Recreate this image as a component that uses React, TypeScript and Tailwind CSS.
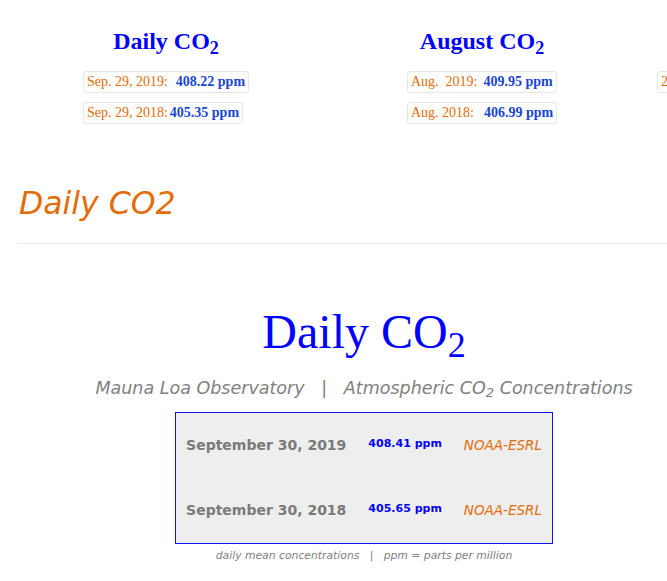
import React from 'react';

const serif = "font-['Liberation_Serif','Times_New_Roman',serif]";
const sans = "font-['DejaVu_Sans','Verdana',sans-serif]";

type Reading = { date: string; value: string; gap: string; shift?: string };

const tiles: { title: string; rows: Reading[]; align?: string }[] = [
  {
    title: 'Daily CO',
    rows: [
      { date: 'Sep. 29, 2019:', value: '408.22 ppm', gap: 'gap-[8px]' },
      { date: 'Sep. 29, 2018:', value: '405.35 ppm', gap: 'gap-[2px]' },
    ],
  },
  {
    title: 'August CO',
    rows: [
      { date: 'Aug.\u00a0\u00a02019:', value: '409.95 ppm', gap: 'gap-[6px]' },
      { date: 'Aug. 2018:', value: '406.99 ppm', gap: 'gap-[10px]' },
    ],
  },
  {
    title: 'Annual CO',
    align: 'items-start pl-[17px]',
    rows: [
      { date: '2018 Annual Mean:', value: '408.52 ppm', gap: 'gap-[8px]' },
      { date: '2017 Annual Mean:', value: '406.76 ppm', gap: 'gap-[8px]', shift: 'ml-[14px]' },
    ],
  },
];

const daily = [
  { date: 'September 30, 2019', value: '408.41 ppm' },
  { date: 'September 30, 2018', value: '405.65 ppm' },
];

function Tile({ title, rows, align }: (typeof tiles)[number]) {
  return (
    <div className={`w-[316px] shrink-0 flex flex-col ${align ?? 'items-center'}`}>
      <h2 className={`${serif} text-[24px] leading-[28px] font-bold text-[#0000ff] ${align ? 'self-center' : ''}`}>
        {title}<sub>2</sub>
      </h2>
      <div className="mt-[16px] flex flex-col gap-[9px] items-[inherit]">
        {rows.map((r) => (
          <div
            key={r.date}
            className={`${serif} ${r.gap} ${r.shift ?? ''} flex text-[14px] leading-[16px] whitespace-nowrap border border-[#e6e6e6] rounded-[3px] px-[3px] py-[2px] w-fit`}
          >
            <span className="text-[#e36c09]">{r.date}</span>
            <span className="font-bold text-[#1846cf]">{r.value}</span>
          </div>
        ))}
      </div>
    </div>
  );
}

export default function App() {
  return (
    <div className="w-[667px] h-[581px] overflow-hidden bg-white">
      <div className="w-[1000px]">
        <div className="flex pl-[8px] pt-[27px]">
          {tiles.map((t) => (
            <Tile key={t.title} {...t} />
          ))}
        </div>

        <main className="ml-[18px] w-[692px]">
          <h1 className={`${sans} italic text-[31.5px] leading-[36px] text-[#e36c09] mt-[61px] pl-[1px]`}>
            Daily CO2
          </h1>
          <hr className="mt-[22px] border-0 h-px bg-[#ececec]" />

          <div className="flex flex-col items-center">
            <h2 className={`${serif} text-[48px] leading-none text-[#0000ff] mt-[64px]`}>
              Daily CO<sub>2</sub>
            </h2>
            <p className={`${sans} italic text-[17.5px] leading-[22px] text-[#808080] mt-[21px] whitespace-nowrap`}>
              Mauna Loa Observatory&nbsp;&nbsp;&nbsp;|&nbsp;&nbsp;&nbsp;Atmospheric CO<sub>2</sub> Concentrations
            </p>

            <div className="mt-[13px] border border-[#1010ee] bg-[#eeeeee]">
              {daily.map((d) => (
                <div key={d.date} className="flex items-center h-[65px]">
                  <span className={`${sans} font-bold text-[14px] text-[#7a7a7a] pl-[10px] pr-[11px]`}>{d.date}</span>
                  <span className={`${sans} font-bold text-[11px] text-[#0000ff] px-[11px] -mt-[3px]`}>{d.value}</span>
                  <span className={`${sans} italic text-[13.5px] text-[#e36c09] pl-[11px] pr-[10px]`}>NOAA-ESRL</span>
                </div>
              ))}
            </div>

            <p className={`${sans} italic text-[10.8px] leading-[14px] text-[#808080] mt-[5px] whitespace-nowrap`}>
              daily mean concentrations&nbsp;&nbsp;&nbsp;|&nbsp;&nbsp;&nbsp;ppm = parts per million
            </p>
          </div>
        </main>
      </div>
    </div>
  );
}
